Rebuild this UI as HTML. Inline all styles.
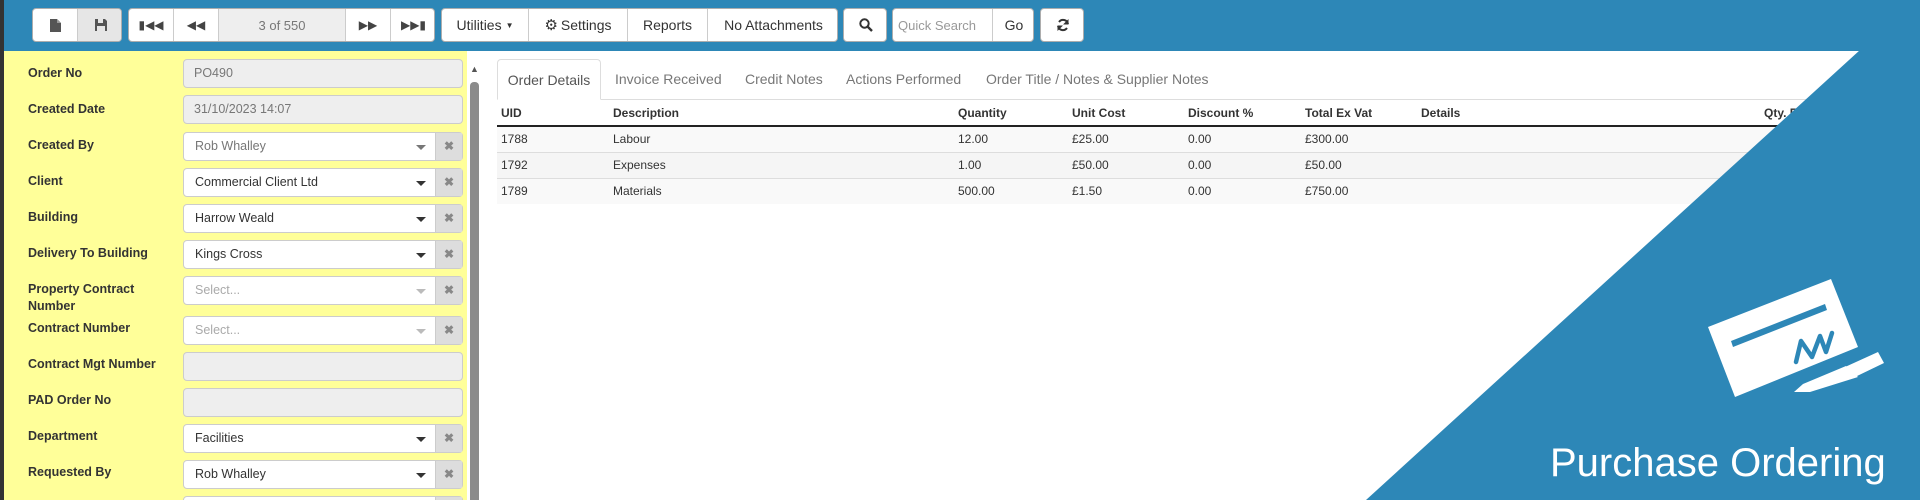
<!DOCTYPE html>
<html style="width:1920px;height:500px;overflow:hidden"><head><meta charset="utf-8"><style>
*{box-sizing:border-box;margin:0;padding:0}
body{width:1920px;height:500px;overflow:hidden;background:#fff;font-family:"Liberation Sans",Arial,sans-serif;color:#333}
#wrap{position:relative;width:1920px;height:500px;overflow:hidden}
.abs{position:absolute}
#bar{left:0;top:0;width:1920px;height:51px;background:#2d87b7}
#dark{left:0;top:0;width:4px;height:500px;background:#333;z-index:5}
.grp{position:absolute;top:8px;height:34px;display:flex;border:1px solid #adadad;border-radius:4px;background:#fff;overflow:hidden}
.grp div{height:100%;display:flex;align-items:center;justify-content:center;border-right:1px solid #ccc;font-size:14px;color:#333;flex:none}
.grp div:last-child{border-right:none}
#yellow{left:4px;top:51px;width:463px;height:449px;background:#ffff99}
.lbl{position:absolute;left:28px;font-size:12.5px;font-weight:bold;color:#333;line-height:17px}
.inp{position:absolute;left:183px;width:280px;height:29px;border:1px solid #ccc;border-radius:4px;background:#eee;font-size:12.5px;color:#777;padding-left:10px;line-height:27px}
.sel{background:#fff;color:#333;padding-left:11px}
.sel .car{position:absolute;right:36px;top:12px;width:0;height:0;border-left:5px solid transparent;border-right:5px solid transparent;border-top:5px solid #333}
.sel .x{position:absolute;right:0;top:0;width:27px;height:27px;background:#ddd;border-left:1px solid #ccc;color:#888;font-size:12px;text-align:center;line-height:27px;font-weight:bold}
.ph{color:#aaa}.ph .car{border-top-color:#bbb}
#sb{left:470px;top:82px;width:9px;height:418px;background:#8b8b8b;border-radius:4px 4px 0 0}
.tab{position:absolute;top:59px;height:41px;font-size:14px;color:#777;line-height:41px}
th,td{font-size:12px;text-align:left}
</style></head><body><div id="wrap">
<div id="bar" class="abs"></div>
<div id="dark" class="abs"></div>

<div class="grp" style="left:32px;width:90px">
<div style="width:45px"><svg width="11" height="13"><path d="M0 0H7L11 4V13H0Z" fill="#555"/><path d="M7 0V4H11" fill="#999"/></svg></div>
<div style="width:45px;background:#e6e6e6"><svg width="12" height="12"><path d="M0 0H10L12 2V12H0Z" fill="#555"/><rect x="3" y="0" width="5" height="4" fill="#e6e6e6"/><rect x="2" y="7" width="8" height="5" fill="#e6e6e6"/></svg></div>
</div>
<div class="grp" style="left:128px;width:307px">
<div style="width:45px;font-size:12px;color:#444">&#9646;&#9664;&#9664;</div>
<div style="width:45px;font-size:12px;color:#444">&#9664;&#9664;</div>
<div style="width:127px;background:#eee;color:#777;font-size:13px">3 of 550</div>
<div style="width:45px;font-size:12px;color:#444">&#9654;&#9654;</div>
<div style="width:45px;font-size:12px;color:#444">&#9654;&#9654;&#9646;</div>
</div>
<div class="grp" style="left:441px;width:397px">
<div style="width:87px">Utilities <span style="font-size:8px;margin-left:4px">&#9660;</span></div>
<div style="width:99px"><span style="font-size:15px;margin-right:3px">&#9881;</span>Settings</div>
<div style="width:80px">Reports</div>
<div style="width:131px">No Attachments</div>
</div>
<div class="grp" style="left:843px;width:44px"><div style="width:44px"><svg width="14" height="14"><circle cx="5.5" cy="5.5" r="4.2" stroke="#333" stroke-width="2" fill="none"/><path d="M8.5 8.5L13 13" stroke="#333" stroke-width="2.4"/></svg></div></div>
<div class="grp" style="left:892px;width:142px">
<div style="width:100px;justify-content:flex-start;padding-left:5px;color:#999;font-size:13px">Quick Search</div>
<div style="width:42px">Go</div>
</div>
<div class="grp" style="left:1040px;width:44px"><div style="width:44px"><svg width="14" height="14"><path d="M12 6A5 5 0 0 0 3 4M2 8A5 5 0 0 0 11 10" stroke="#333" stroke-width="2" fill="none"/><path d="M12.5 1V6.5H7Z M1.5 13V7.5H7Z" fill="#333"/></svg></div></div>

<div id="yellow" class="abs"></div>
<div class="abs" style="left:470px;top:64px;font-size:9px;color:#555">&#9650;</div>
<div id="sb" class="abs"></div>

<div class="lbl" style="top:65px">Order No</div><div class="inp" style="top:59px">PO490</div>
<div class="lbl" style="top:101px">Created Date</div><div class="inp" style="top:95px">31/10/2023 14:07</div>
<div class="lbl" style="top:137px">Created By</div><div class="inp sel" style="top:132px;color:#777">Rob Whalley<span class="car" style="border-top-color:#777"></span><span class="x">&#10006;</span></div>
<div class="lbl" style="top:173px">Client</div><div class="inp sel" style="top:168px">Commercial Client Ltd<span class="car"></span><span class="x">&#10006;</span></div>
<div class="lbl" style="top:209px">Building</div><div class="inp sel" style="top:204px">Harrow Weald<span class="car"></span><span class="x">&#10006;</span></div>
<div class="lbl" style="top:245px">Delivery To Building</div><div class="inp sel" style="top:240px">Kings Cross<span class="car"></span><span class="x">&#10006;</span></div>
<div class="lbl" style="top:281px">Property Contract<br>Number</div><div class="inp sel ph" style="top:276px">Select...<span class="car"></span><span class="x">&#10006;</span></div>
<div class="lbl" style="top:320px">Contract Number</div><div class="inp sel ph" style="top:316px">Select...<span class="car"></span><span class="x">&#10006;</span></div>
<div class="lbl" style="top:356px">Contract Mgt Number</div><div class="inp" style="top:352px"></div>
<div class="lbl" style="top:392px">PAD Order No</div><div class="inp" style="top:388px"></div>
<div class="lbl" style="top:428px">Department</div><div class="inp sel" style="top:424px">Facilities<span class="car"></span><span class="x">&#10006;</span></div>
<div class="lbl" style="top:464px">Requested By</div><div class="inp sel" style="top:460px">Rob Whalley<span class="car"></span><span class="x">&#10006;</span></div>
<div class="inp sel" style="top:496px"><span class="x"></span></div>

<div class="abs" style="left:497px;top:99px;width:1423px;height:1px;background:#ddd"></div>
<div class="tab" style="left:497px;width:104px;border:1px solid #ddd;border-bottom:1px solid #fff;border-radius:4px 4px 0 0;background:#fff;color:#555;text-align:center">Order Details</div>
<div class="tab" style="left:615px">Invoice Received</div>
<div class="tab" style="left:745px">Credit Notes</div>
<div class="tab" style="left:846px">Actions Performed</div>
<div class="tab" style="left:986px">Order Title / Notes &amp; Supplier Notes</div>

<div class="abs" style="left:497px;top:100px;width:1423px">
<table style="border-collapse:collapse;width:100%;table-layout:fixed">
<colgroup><col style="width:116px"><col style="width:345px"><col style="width:114px"><col style="width:116px"><col style="width:117px"><col style="width:116px"><col style="width:343px"><col></colgroup>
<tr style="height:26px;border-bottom:2px solid #222"><th style="padding-left:4px">UID</th><th>Description</th><th>Quantity</th><th>Unit Cost</th><th>Discount %</th><th>Total Ex Vat</th><th>Details</th><th>Qty. R</th></tr>
<tr style="height:26px;background:#f9f9f9;border-bottom:1px solid #ddd"><td style="padding-left:4px">1788</td><td>Labour</td><td>12.00</td><td>£25.00</td><td>0.00</td><td>£300.00</td><td></td><td></td></tr>
<tr style="height:26px;background:#f5f5f5;border-bottom:1px solid #ddd"><td style="padding-left:4px">1792</td><td>Expenses</td><td>1.00</td><td>£50.00</td><td>0.00</td><td>£50.00</td><td></td><td></td></tr>
<tr style="height:26px;background:#f9f9f9"><td style="padding-left:4px">1789</td><td>Materials</td><td>500.00</td><td>£1.50</td><td>0.00</td><td>£750.00</td><td></td><td></td></tr>
</table></div>

<svg class="abs" style="left:0;top:0" width="1920" height="500">
<polygon points="1860,50 1920,50 1920,500 1366,500" fill="#2d87b7"/>
<polygon points="1708,327 1831,279 1858,347 1735,397" fill="#fff"/>
<polygon points="1731,341 1825,304 1827,310 1733,347" fill="#2d87b7"/>
<path d="M1796,362 L1801,341 L1812,357 L1820,336 L1826,352 L1832,333" stroke="#2d87b7" stroke-width="4.5" fill="none" stroke-linecap="round" stroke-linejoin="round"/>
<polygon points="1794,392 1803,384 1846,366 1858,377 1810,392" fill="#fff"/>
<polygon points="1845,367 1878,352 1884,363 1855,377" fill="#fff"/>
<text x="1550" y="476" font-family="Liberation Sans, sans-serif" font-size="40" fill="#fff">Purchase Ordering</text>
</svg>
</div></body></html>
